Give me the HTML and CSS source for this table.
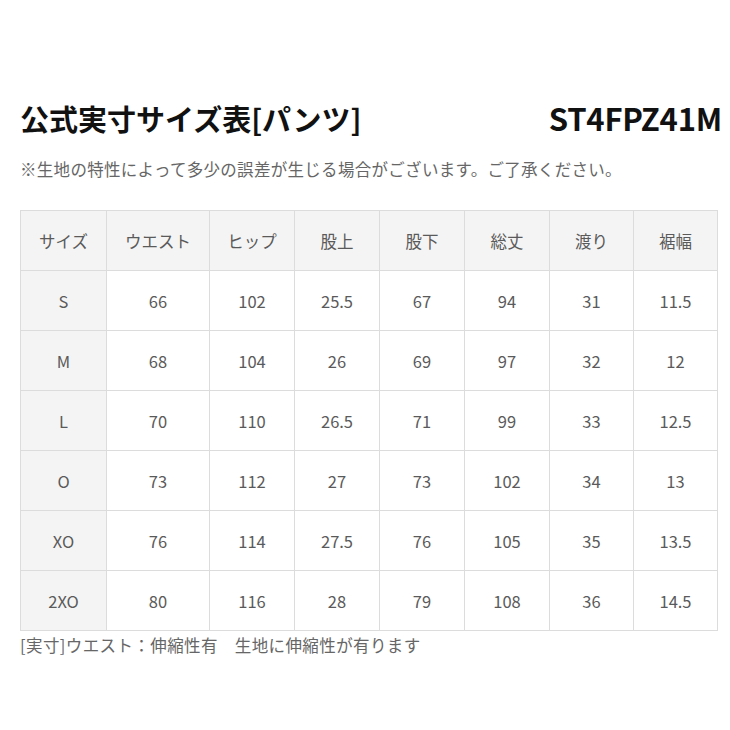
FILE: index.html
```html
<!DOCTYPE html>
<html lang="ja">
<head>
<meta charset="utf-8">
<link rel="stylesheet" href="styles.css">
</head>
<body>
<div class="page">
  <div class="head">
    <h1 class="title">公式実寸サイズ表[パンツ]</h1>
    <div class="code">ST4FPZ41M</div>
  </div>
  <p class="note">※生地の特性によって多少の誤差が生じる場合がございます。ご了承ください。</p>
  <table class="sizes">
    <colgroup>
      <col class="c1"><col class="c2"><col class="c3"><col class="c3"><col class="c3"><col class="c3"><col class="c4"><col class="c4">
    </colgroup>
    <thead>
      <tr><th>サイズ</th><th>ウエスト</th><th>ヒップ</th><th>股上</th><th>股下</th><th>総丈</th><th>渡り</th><th>裾幅</th></tr>
    </thead>
    <tbody>
      <tr><th>S</th><td>66</td><td>102</td><td>25.5</td><td>67</td><td>94</td><td>31</td><td>11.5</td></tr>
      <tr><th>M</th><td>68</td><td>104</td><td>26</td><td>69</td><td>97</td><td>32</td><td>12</td></tr>
      <tr><th>L</th><td>70</td><td>110</td><td>26.5</td><td>71</td><td>99</td><td>33</td><td>12.5</td></tr>
      <tr><th>O</th><td>73</td><td>112</td><td>27</td><td>73</td><td>102</td><td>34</td><td>13</td></tr>
      <tr><th>XO</th><td>76</td><td>114</td><td>27.5</td><td>76</td><td>105</td><td>35</td><td>13.5</td></tr>
      <tr><th>2XO</th><td>80</td><td>116</td><td>28</td><td>79</td><td>108</td><td>36</td><td>14.5</td></tr>
    </tbody>
  </table>
  <p class="foot">[実寸]ウエスト：伸縮性有　生地に伸縮性が有ります</p>
</div>
</body>
</html>
```
FILE: styles.css
```css
html, body {
  margin: 0;
  padding: 0;
  background: #fff;
}
body {
  font-family: "Noto Sans CJK JP", "Noto Sans", sans-serif;
  color: #555;
}
.page {
  padding: 100px 8px 0 20px;
}
.head {
  display: flex;
  justify-content: space-between;
  align-items: center;
  height: 36px;
}
.title {
  margin: 0;
  font-size: 29px;
  font-weight: 700;
  color: #111;
  line-height: 36px;
  letter-spacing: 0;
}
.code {
  font-size: 31px;
  font-weight: 700;
  color: #111;
  line-height: 36px;
  letter-spacing: -0.2px;
}
.note {
  margin: 21px 0 0 0;
  font-size: 16.5px;
  line-height: 24px;
  color: #666;
  letter-spacing: 0.3px;
}
.sizes {
  margin-top: 29px;
  border-collapse: collapse;
  table-layout: fixed;
  width: 696px;
}
.c1 { width: 86px; }
.c2 { width: 103px; }
.c3 { width: 85px; }
.c4 { width: 84px; }
.sizes th, .sizes td {
  border: 1px solid #dcdcdc;
  height: 59px;
  padding: 0;
  text-align: center;
  font-weight: 400;
  font-size: 16.5px;
  color: #5a5a5a;
}
.sizes thead th,
.sizes tbody th {
  background: #f4f4f4;
}
.sizes td {
  background: #fff;
}
.foot {
  margin: 2px 0 0 0;
  font-size: 16.5px;
  line-height: 24px;
  color: #666;
  letter-spacing: 0.4px;
}
```
